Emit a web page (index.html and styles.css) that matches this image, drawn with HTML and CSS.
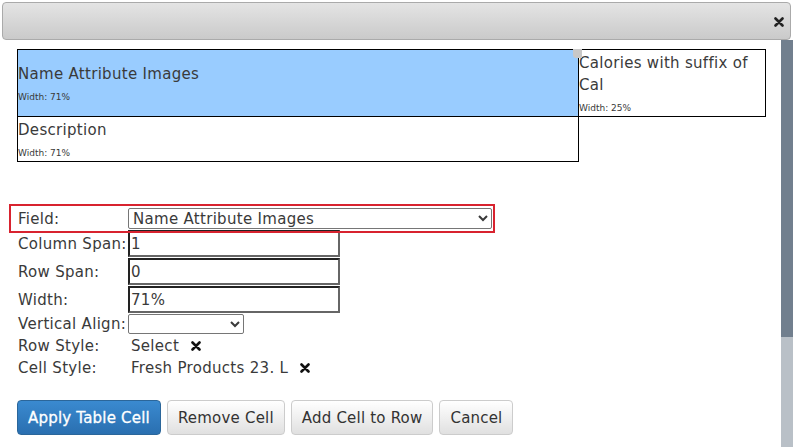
FILE: index.html
```html
<!DOCTYPE html>
<html lang="en">
<head>
    <meta charset="UTF-8">
    <title>Table Cell</title>
    <link rel="stylesheet" href="styles.css">
</head>
<body>
    <div class="dialog">
        <div class="titlebar">
            <button class="close-btn" type="button" title="Close">
                <svg width="10" height="10" viewBox="0 0 10 10"><path d="M1.5 1.5 L8.5 8.5 M8.5 1.5 L1.5 8.5" stroke="#222" stroke-width="2.6" stroke-linecap="round"/></svg>
            </button>
        </div>

        <div class="dialog-body">
            <div class="content">
                <div class="cells">
                    <table class="cell-table">
                        <tr class="row-1">
                            <td class="cell cell-wide selected">
                                <div class="cell-name">Name Attribute Images</div>
                                <div class="cell-width">Width: 71%</div>
                            </td>
                            <td class="cell cell-narrow">
                                <div class="cell-name">Calories with suffix of Cal</div>
                                <div class="cell-width">Width: 25%</div>
                            </td>
                        </tr>
                        <tr class="row-2">
                            <td class="cell cell-wide">
                                <div class="cell-name">Description</div>
                                <div class="cell-width">Width: 71%</div>
                            </td>
                        </tr>
                    </table>
                    <span class="resize-handle"></span>
                </div>

                <form class="cell-form">
                    <div class="form-row field-row">
                        <label for="field">Field:</label>
                        <select id="field" class="select-wide">
                            <option>Name Attribute Images</option>
                        </select>
                    </div>
                    <div class="form-row">
                        <label for="colspan">Column Span:</label>
                        <input id="colspan" class="text-input" type="text" value="1">
                    </div>
                    <div class="form-row">
                        <label for="rowspan">Row Span:</label>
                        <input id="rowspan" class="text-input" type="text" value="0">
                    </div>
                    <div class="form-row">
                        <label for="width">Width:</label>
                        <input id="width" class="text-input" type="text" value="71%">
                    </div>
                    <div class="form-row">
                        <label for="valign">Vertical Align:</label>
                        <select id="valign" class="select-small">
                            <option></option>
                        </select>
                    </div>
                    <div class="form-row text-row first-text-row">
                        <label>Row Style:</label>
                        <span class="style-value">Select
                            <svg class="remove-x" width="10" height="10" viewBox="0 0 10 10"><path d="M1.5 1.5 L8.5 8.5 M8.5 1.5 L1.5 8.5" stroke="#111" stroke-width="2.6" stroke-linecap="round"/></svg>
                        </span>
                    </div>
                    <div class="form-row text-row">
                        <label>Cell Style:</label>
                        <span class="style-value">Fresh Products 23. L
                            <svg class="remove-x" width="10" height="10" viewBox="0 0 10 10"><path d="M1.5 1.5 L8.5 8.5 M8.5 1.5 L1.5 8.5" stroke="#111" stroke-width="2.6" stroke-linecap="round"/></svg>
                        </span>
                    </div>

                    <div class="actions">
                        <button type="button" class="btn btn-primary">Apply Table Cell</button>
                        <button type="button" class="btn">Remove Cell</button>
                        <button type="button" class="btn">Add Cell to Row</button>
                        <button type="button" class="btn">Cancel</button>
                    </div>
                </form>
            </div>

            <div class="scrollbar">
                <div class="scroll-thumb"></div>
            </div>
        </div>
    </div>
</body>
</html>
```

FILE: styles.css
```css
body {
    margin: 0;
    padding: 0;
    background-color: #fff;
    font-family: "DejaVu Sans", Verdana, sans-serif;
    color: #3a3a3a;
}
.dialog {
    width: 793px;
    height: 447px;
    overflow: hidden;
}
.titlebar {
    margin: 2px 2px 0 2px;
    height: 36px;
    border: 1px solid #aaa;
    border-radius: 4px;
    background: linear-gradient(#e4e4e4, #cacaca);
    display: flex;
    align-items: center;
    justify-content: flex-end;
}
.close-btn {
    border: none;
    background: none;
    padding: 0;
    margin-right: 6px;
    margin-top: 2px;
    width: 10px;
    height: 10px;
    display: flex;
}
.dialog-body {
    display: flex;
    height: 407px;
}
.content {
    flex: 1;
    padding: 9px 0 0 17px;
}
.scrollbar {
    width: 12px;
    background-color: #b9c0c7;
}
.scroll-thumb {
    height: 297px;
    background-color: #717f8e;
}

/* cells preview */
.cells {
    position: relative;
    width: 750px;
}
.cell-table {
    border-collapse: collapse;
}
.cell {
    border: 1px solid #000;
    padding: 0;
    vertical-align: middle;
}
.cell-wide {
    width: 560px;
}
.cell-narrow {
    width: 186px;
    vertical-align: top;
}
.row-1 {
    height: 67px;
}
.row-2 {
    height: 45px;
}
.selected {
    background-color: #99ccff;
}
.cell-name {
    font-size: 15px;
    letter-spacing: 0.3px;
    line-height: 22px;
}
.cell-width {
    font-size: 9px;
    line-height: 14px;
    margin-top: 5px;
}
.cell-narrow .cell-name {
    padding-top: 2px;
}
.resize-handle {
    position: absolute;
    left: 556px;
    top: 0;
    width: 9px;
    height: 9px;
    background-color: #c8c8c8;
    border-radius: 0 0 0 3px;
}

/* form */
.cell-form {
    margin-top: 42px;
    font-size: 15px;
    letter-spacing: 0.3px;
}
.form-row {
    display: flex;
    align-items: center;
    margin-bottom: 1px;
}
.form-row label {
    width: 111px;
    flex-shrink: 0;
    padding-left: 1px;
    box-sizing: border-box;
    white-space: nowrap;
}
.field-row {
    margin-left: -8px;
    width: 474px;
    border: 2px solid #d8232f;
    padding: 2px 1px 2px 7px;
    margin-bottom: -3px;
    position: relative;
    z-index: 1;
}
.field-row label {
    width: 110px;
    padding-left: 0;
}
select {
    font-family: inherit;
    font-size: 15px;
    letter-spacing: 0.3px;
    color: #3a3a3a;
    background-color: #fff;
    border: 1px solid #767676;
    border-radius: 2px;
    padding: 0;
    box-sizing: border-box;
}
.select-wide {
    width: 364px;
    height: 21px;
}
.select-small {
    width: 116px;
    height: 20px;
}
.text-input {
    width: 212px;
    height: 27px;
    box-sizing: border-box;
    font-family: inherit;
    font-size: 15px;
    letter-spacing: 0.3px;
    color: #3a3a3a;
    padding: 0 1px;
    border-style: solid;
    border-width: 2px;
    border-color: #222 #666 #666 #222;
}
.text-row {
    height: 22px;
    margin-bottom: 0;
}
.first-text-row {
    margin-top: 1px;
}
.style-value {
    padding-left: 3px;
    display: flex;
    align-items: center;
}
.remove-x {
    margin-left: 12px;
}

/* buttons */
.actions {
    display: flex;
    gap: 6px;
    margin-top: 21px;
}
.btn {
    height: 35px;
    padding: 0 10px;
    font-family: inherit;
    font-size: 15px;
    letter-spacing: 0.2px;
    color: #333;
    border: 1px solid #ccc;
    border-radius: 4px;
    background: linear-gradient(#ffffff, #e0e0e0);
}
.btn-primary {
    color: #fff;
    border-color: #2b669a;
    background: linear-gradient(#3a8ad0, #2a6fb0);
    -webkit-text-stroke: 0.3px #fff;
}
```
